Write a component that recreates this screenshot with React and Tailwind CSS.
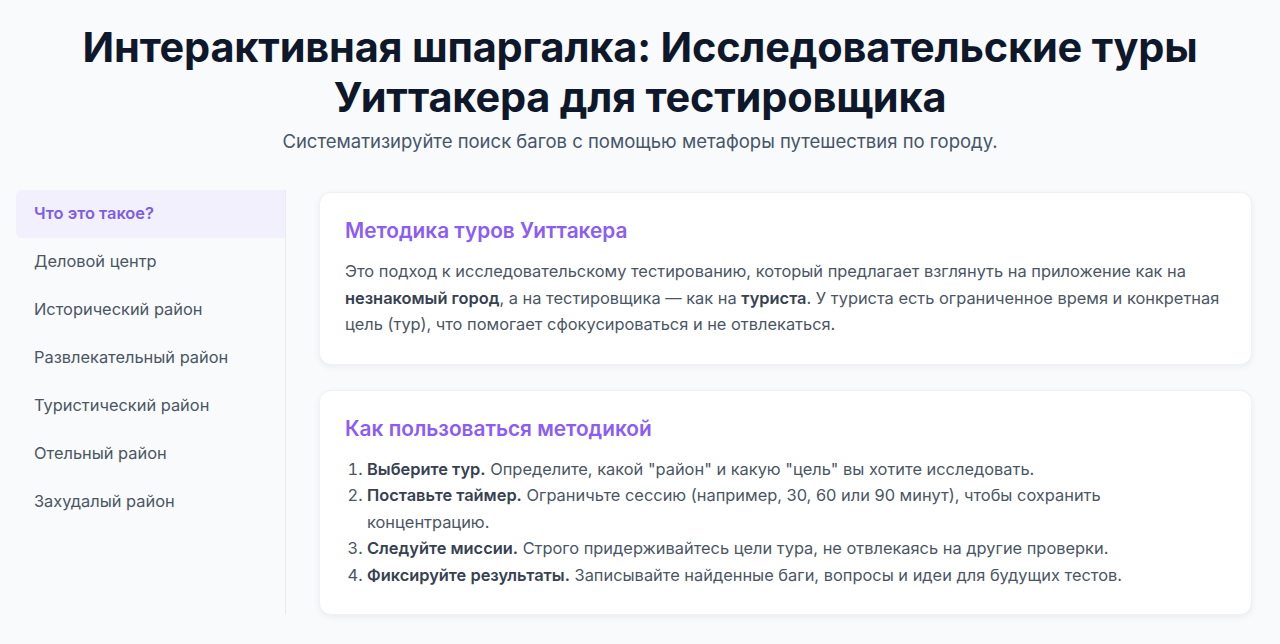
import React from 'react';

const navItems = [
  'Что это такое?',
  'Деловой центр',
  'Исторический район',
  'Развлекательный район',
  'Туристический район',
  'Отельный район',
  'Захудалый район',
];

export default function App() {
  return (
    <div className="min-h-screen bg-[#f8fafc] text-slate-600" style={{ fontFamily: 'Inter, "Noto Sans", sans-serif' }}>
      <header className="text-center pt-[22px] px-4">
        <h1 className="text-[41.5px] leading-[50px] font-bold text-[#0f172a] tracking-[-0.2px]">
          Интерактивная шпаргалка: Исследовательские туры
          <br />
          Уиттакера для тестировщика
        </h1>
        <p className="mt-[5px] text-[18.5px] leading-[28px] text-[#475569]">
          Систематизируйте поиск багов с помощью метафоры путешествия по городу.
        </p>
      </header>

      <div className="flex pl-4 pr-[28px] mt-[35px]">
        <nav className="w-[270px] shrink-0 border-r border-[#e8ecf1] pb-[20px]">
          <ul>
            {navItems.map((item, i) => (
              <li key={item}>
                <a
                  href="#"
                  className={`block h-[48px] leading-[46px] px-[18px] text-[16.4px] ${
                    i === 0
                      ? 'bg-[#f3f0fd] text-[#7c5ce8] font-semibold rounded-l-md'
                      : 'text-[#4b5563]'
                  }`}
                >
                  {item}
                </a>
              </li>
            ))}
          </ul>
        </nav>

        <main className="flex-1 pl-[33px] pt-[2px] flex flex-col gap-[25px]">
          <section className="bg-white rounded-xl border border-[#eef1f5] shadow-[0_2px_6px_rgba(15,23,42,0.06)] px-[25px] pt-[22px] pb-[26px]">
            <h2 className="text-[20.8px] leading-[32px] font-semibold text-[#8b5cf6] mb-[11px]">
              Методика туров Уиттакера
            </h2>
            <p className="text-[16.4px] leading-[26.5px] text-[#4b5563]">
              Это подход к исследовательскому тестированию, который предлагает взглянуть на приложение как на{' '}
              <strong className="font-semibold text-[#374151]">незнакомый город</strong>, а на тестировщика — как на{' '}
              <strong className="font-semibold text-[#374151]">туриста</strong>. У туриста есть ограниченное время и конкретная
              цель (тур), что помогает сфокусироваться и не отвлекаться.
            </p>
          </section>

          <section className="bg-white rounded-xl border border-[#eef1f5] shadow-[0_2px_6px_rgba(15,23,42,0.06)] px-[25px] pt-[22px] pb-[26px]">
            <h2 className="text-[20.8px] leading-[32px] font-semibold text-[#8b5cf6] mb-[11px]">
              Как пользоваться методикой
            </h2>
            <ol className="list-decimal pl-[22px] text-[16.4px] leading-[26.6px] text-[#4b5563]">
              <li>
                <strong className="font-semibold text-[#374151]">Выберите тур.</strong> Определите, какой "район" и какую "цель" вы хотите исследовать.
              </li>
              <li>
                <strong className="font-semibold text-[#374151]">Поставьте таймер.</strong> Ограничьте сессию (например, 30, 60 или 90 минут), чтобы сохранить
                <br />
                концентрацию.
              </li>
              <li>
                <strong className="font-semibold text-[#374151]">Следуйте миссии.</strong> Строго придерживайтесь цели тура, не отвлекаясь на другие проверки.
              </li>
              <li>
                <strong className="font-semibold text-[#374151]">Фиксируйте результаты.</strong> Записывайте найденные баги, вопросы и идеи для будущих тестов.
              </li>
            </ol>
          </section>
        </main>
      </div>
    </div>
  );
}
